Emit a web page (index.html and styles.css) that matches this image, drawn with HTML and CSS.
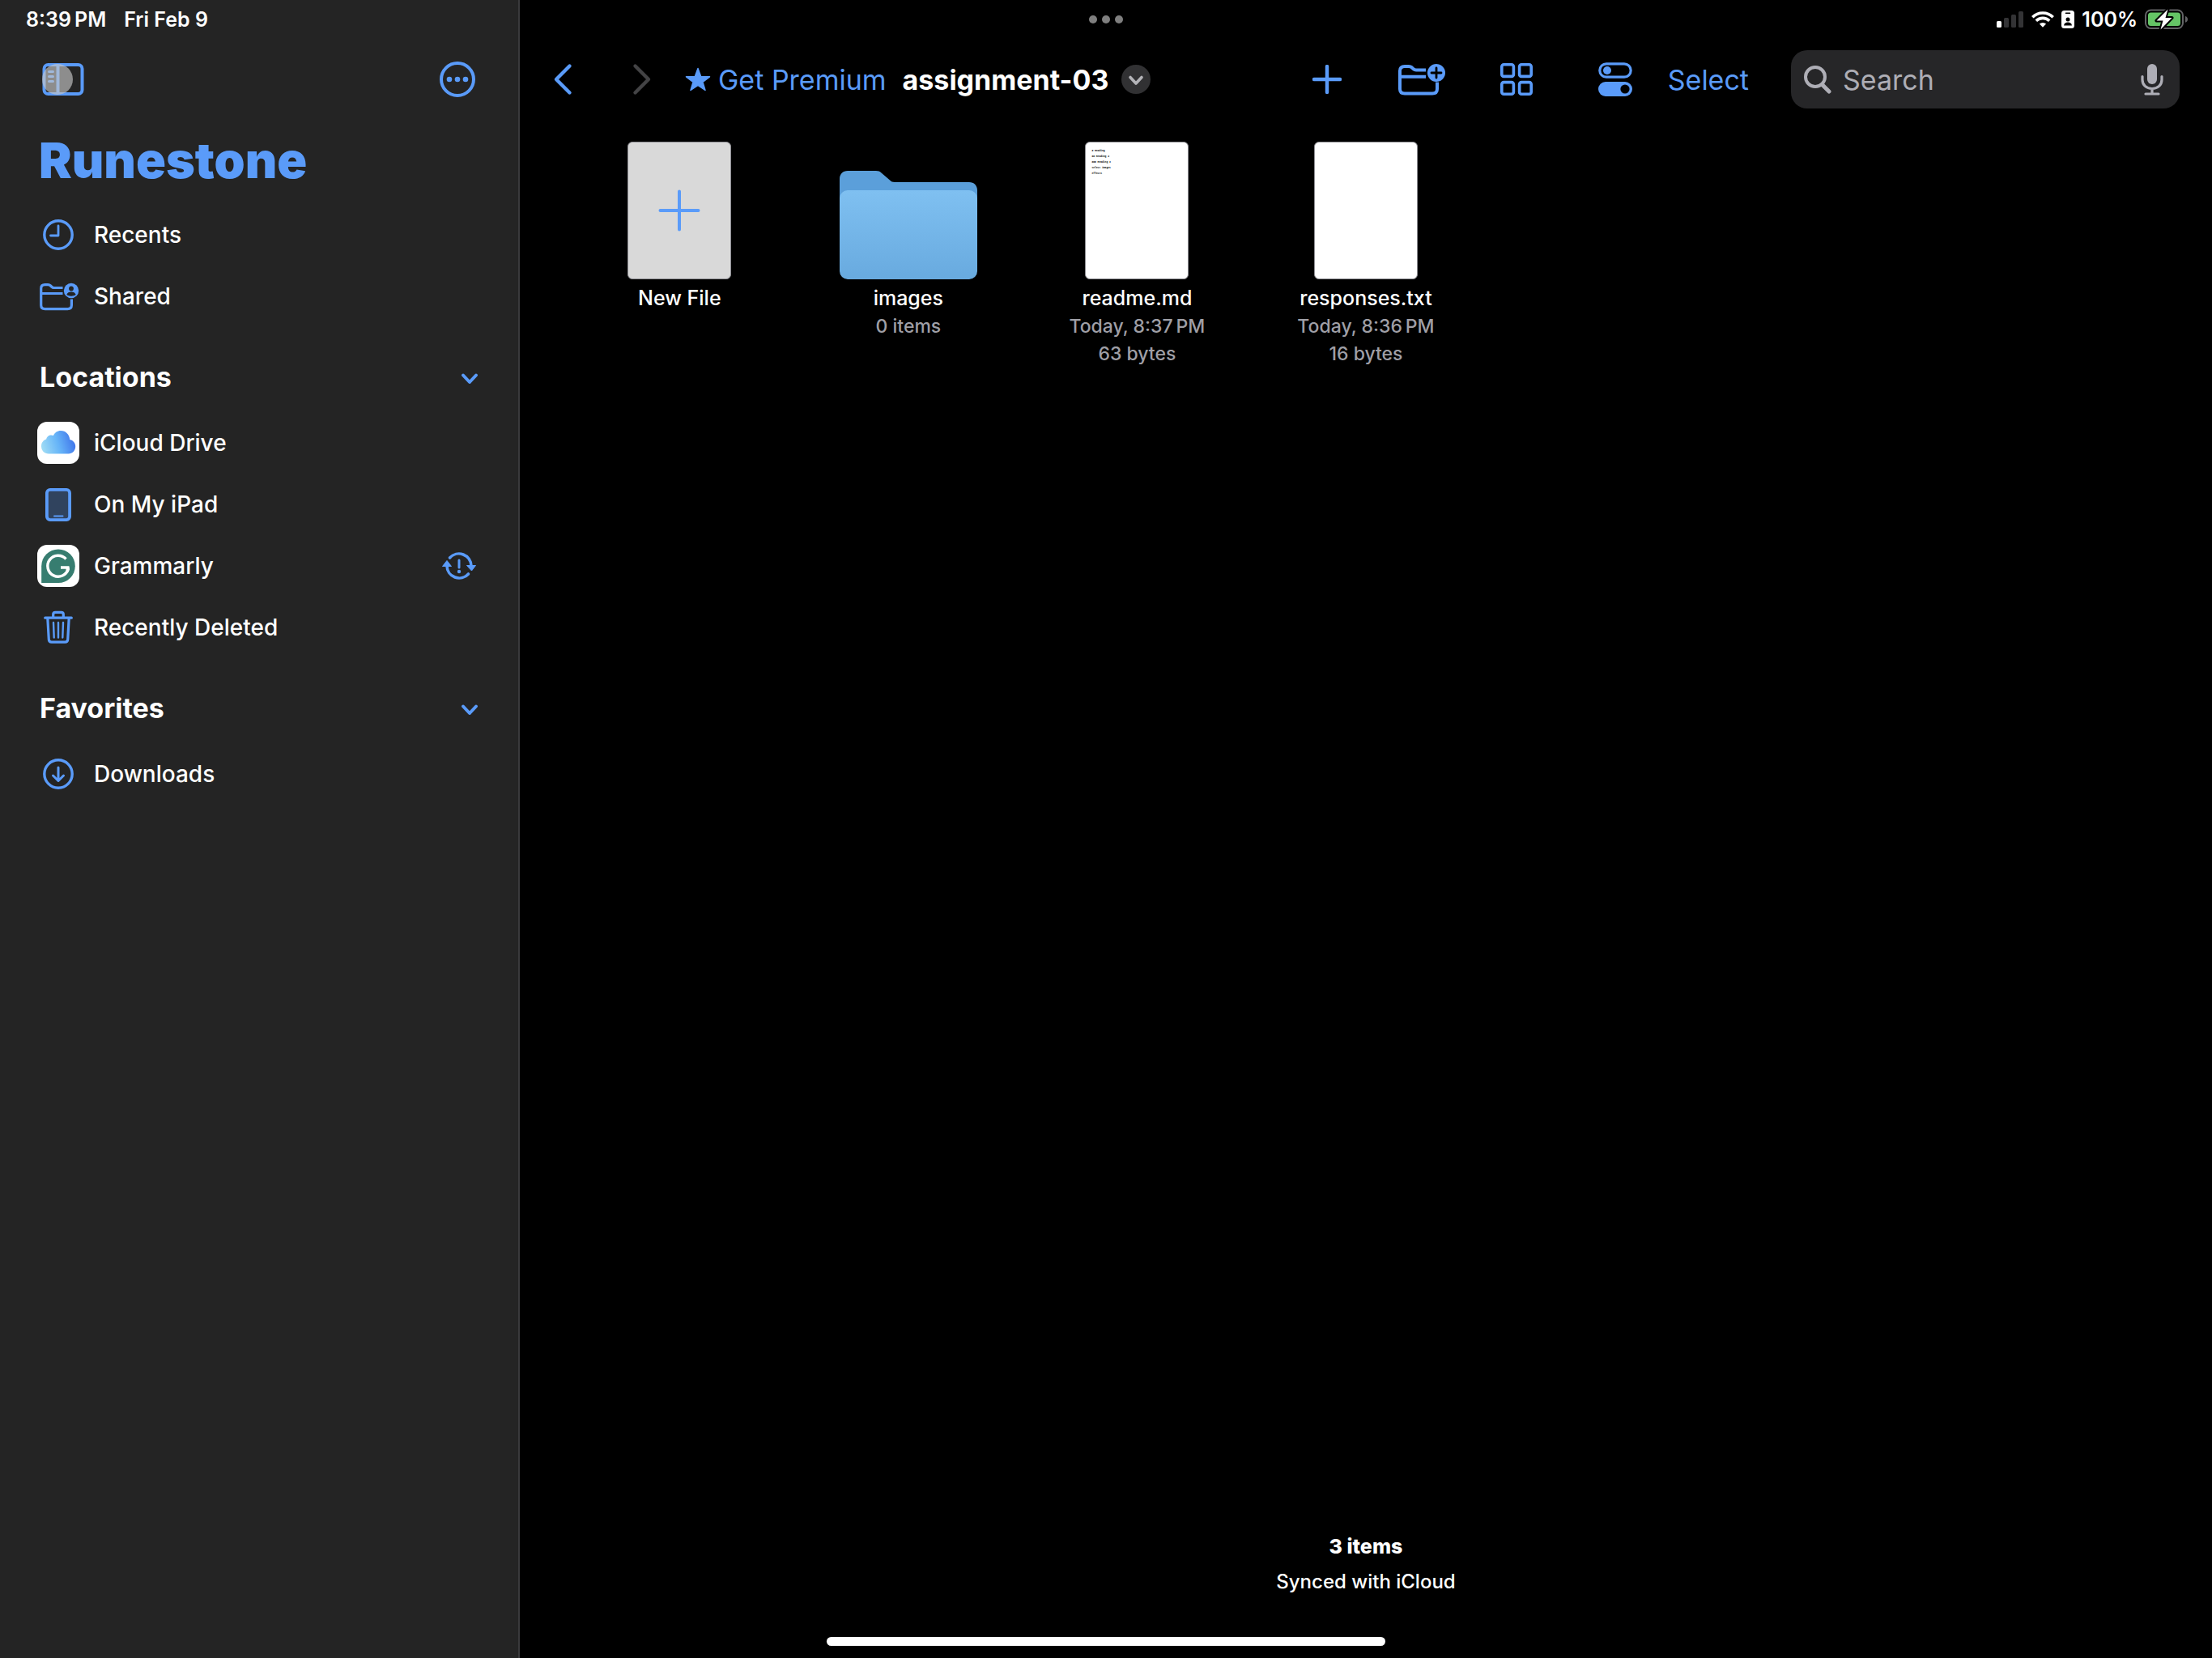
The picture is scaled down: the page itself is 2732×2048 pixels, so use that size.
FILE: index.html
```html
<!DOCTYPE html>
<html lang="en">
<head>
<meta charset="utf-8">
<meta name="viewport" content="width=device-width, initial-scale=1">
<title>Runestone – assignment-03</title>
<link rel="stylesheet" href="styles.css">
</head>
<body>
<div class="app">
  <aside class="sidebar">
    <div class="status status-left">
      <span>8:39&#8239;PM</span>
      <span>Fri Feb 9</span>
    </div>
    <div class="sidebar-tools">
      <button class="icon-button" type="button" aria-label="Toggle sidebar">
        <svg width="52" height="44" viewBox="0 0 52 44">
          <rect x="2.5" y="4" width="47" height="36" rx="5" fill="none" stroke="#5a9bf9" stroke-width="4"/>
          <path d="M19.500 4v36" stroke="#5a9bf9" stroke-width="4"/>
          <path d="M8.500 12.500h5M8.500 18.500h5M8.500 24.500h5" stroke="#5a9bf9" stroke-width="3" stroke-linecap="round"/>
          <circle cx="19" cy="22" r="19" fill="#c8c8c8" fill-opacity=".64"/>
        </svg>
      </button>
      <button class="icon-button" type="button" aria-label="More options">
        <svg width="44" height="44" viewBox="0 0 44 44">
          <circle cx="22" cy="22" r="20" fill="none" stroke="#5a9bf9" stroke-width="4"/>
          <g fill="#5a9bf9"><circle cx="12" cy="22" r="3.300"/><circle cx="22" cy="22" r="3.300"/><circle cx="32" cy="22" r="3.300"/></g>
        </svg>
      </button>
    </div>
    <h1 class="app-title">Runestone</h1>
    <nav class="nav">
      <ul class="nav-list">
        <li><a class="nav-row" href="#recents">
          <svg class="nav-icon" viewBox="0 0 52 52" fill="none" stroke="#5a9bf9" stroke-linecap="round" stroke-linejoin="round">
            <circle cx="26" cy="26" r="17.200" stroke-width="3.400"/>
            <path d="M26 15v12h-9.500" stroke-width="2.800"/>
          </svg>
          <span>Recents</span></a></li>
        <li><a class="nav-row" href="#shared">
          <svg class="nav-icon" viewBox="0 0 52 52">
            <g fill="none" stroke="#5a9bf9" stroke-width="3.200">
              <path d="M31.500 15.500H20.500c-1.500 0-2-.5-3-1.500l-1-1c-1-1-1.700-1.400-3.200-1.400H9.500c-3 0-4.800 1.700-4.800 4.700V37c0 3 1.700 4.600 4.800 4.600h28c3 0 4.900-1.600 4.900-4.600v-7.500M5 22.500h26.500"/>
            </g>
            <circle cx="42" cy="19" r="9.200" fill="#5a9bf9"/>
            <circle cx="42" cy="16.500" r="2.900" fill="#242424"/>
            <path d="M36.300 24c.8-2.500 3-3.500 5.700-3.500s4.900 1 5.700 3.500c-3 2.300-8.400 2.300-11.400 0z" fill="#242424"/>
          </svg>
          <span>Shared</span></a></li>
      </ul>
      <h2 class="nav-heading"><span>Locations</span>
        <button class="icon-button" type="button" aria-label="Collapse Locations">
          <svg width="22" height="20" viewBox="0 -4 22 20"><path d="M3 3.500l8 8.500 8-8.500" fill="none" stroke="#5a9bf9" stroke-width="4" stroke-linecap="round" stroke-linejoin="round"/></svg>
        </button>
      </h2>
      <ul class="nav-list">
        <li><a class="nav-row" href="#icloud">
          <svg class="nav-icon" viewBox="0 0 52 52">
            <defs><linearGradient id="cloud" x1="0" y1=".7" x2="1" y2=".5"><stop offset="0" stop-color="#9fdcf5"/><stop offset=".5" stop-color="#66b4f8"/><stop offset="1" stop-color="#3f74ea"/></linearGradient></defs>
            <rect width="52" height="52" rx="12" fill="#fff"/>
            <path d="M14 39.500c-5 0-9-4-9-9.300 0-4.300 2.600-7.400 6.200-8.600.4-3 3-5.100 6-5.100 1 0 1.900.2 2.700.6C21.700 13.300 25 11 29 11c6 0 10.900 4.800 11.200 11 4.100.8 7 4.300 7 8.500 0 5-3.800 9-8.500 9z" fill="url(#cloud)"/>
          </svg>
          <span>iCloud Drive</span></a></li>
        <li><a class="nav-row" href="#ipad">
          <svg class="nav-icon" viewBox="0 0 52 52">
            <rect x="11.900" y="7.900" width="28.200" height="37.200" rx="4" fill="#30435e" stroke="#5a9bf9" stroke-width="3.800"/>
            <path d="M21 40.500h10.500" stroke="#5a9bf9" stroke-width="2" stroke-linecap="round"/>
          </svg>
          <span>On My iPad</span></a></li>
        <li><a class="nav-row" href="#grammarly">
          <svg class="nav-icon" viewBox="0 0 52 52">
            <rect width="52" height="52" rx="12" fill="#fff"/>
            <path d="M26 5.500a20.800 20.800 0 1 1 0 41.600H5.200V26.300A20.800 20.800 0 0 1 26 5.500z" fill="#377d70"/>
            <path d="M35.500 17.500A13 13 0 1 0 38.400 29.500M39.500 28H29" fill="none" stroke="#fff" stroke-width="3.400"/>
            <path d="M35.500 33.500V28h4.500l-1.200 5.500z" fill="#fff"/>
          </svg>
          <span class="nav-label">Grammarly</span>
          <svg width="44" height="44" viewBox="0 0 44 44" role="img" aria-label="Sync problem">
            <g fill="none" stroke="#5a9bf9" stroke-width="3.600" stroke-linecap="round">
              <path d="M11.500 12A15.200 15.200 0 0 1 38 22M34.500 32A15.200 15.200 0 0 1 8 22"/>
              <path d="M23 15v9" stroke-width="3"/>
            </g>
            <circle cx="23" cy="29" r="2.200" fill="#5a9bf9"/>
            <path d="M32.500 21.500h11l-5 6.500zM2.500 22.500h11l-5.500-7z" fill="#5a9bf9" stroke="#5a9bf9" stroke-linejoin="round"/>
          </svg></a></li>
        <li><a class="nav-row" href="#deleted">
          <svg class="nav-icon" viewBox="0 0 52 52" fill="none" stroke="#5a9bf9" stroke-width="3.200" stroke-linecap="round" stroke-linejoin="round">
            <path d="M9.700 14.200h32.600M19.700 13.500V10c0-1.700 1-2.600 2.700-2.600h7.200c1.700 0 2.700.9 2.700 2.600v3.500M12.800 14.500l1.500 26.300c.1 2 1.400 3.300 3.400 3.300h16.600c2 0 3.300-1.300 3.400-3.300l1.500-26.300"/>
            <path d="M20 20l.7 18.500M26 20v18.500M32 20l-.7 18.500" stroke-width="2.400"/>
          </svg>
          <span>Recently Deleted</span></a></li>
      </ul>
      <h2 class="nav-heading"><span>Favorites</span>
        <button class="icon-button" type="button" aria-label="Collapse Favorites">
          <svg width="22" height="20" viewBox="0 -4 22 20"><path d="M3 3.500l8 8.500 8-8.500" fill="none" stroke="#5a9bf9" stroke-width="4" stroke-linecap="round" stroke-linejoin="round"/></svg>
        </button>
      </h2>
      <ul class="nav-list">
        <li><a class="nav-row" href="#downloads">
          <svg class="nav-icon" viewBox="0 0 52 52" fill="none" stroke="#5a9bf9" stroke-linecap="round" stroke-linejoin="round">
            <circle cx="26" cy="26" r="17.200" stroke-width="3.400"/>
            <path d="M26 18v16M19.500 28l6.500 6.500 6.500-6.500" stroke-width="3"/>
          </svg>
          <span>Downloads</span></a></li>
      </ul>
    </nav>
  </aside>

  <main class="main">
    <div class="status status-right">
      <svg width="34" height="20" viewBox="0 0 34 20">
        <rect x="0" y="12" width="6" height="8" rx="1.500" fill="#fff"/>
        <g fill="#333335"><rect x="9" y="8" width="6" height="12" rx="1.500"/><rect x="18" y="4" width="6" height="16" rx="1.500"/><rect x="27" y="0" width="6" height="20" rx="1.500"/></g>
      </svg>
      <svg width="28" height="20" viewBox="0 0 28 20">
        <g fill="none" stroke="#fff" stroke-width="3.600"><path d="M1.300 7.200a18 18 0 0 1 25.400 0M5.800 11.800a11.600 11.600 0 0 1 16.400 0"/></g>
        <path d="M9.900 15.600a5.800 5.800 0 0 1 8.200 0L14 19.800z" fill="#fff"/>
      </svg>
      <svg width="16" height="22" viewBox="0 0 16 22">
        <rect x="0" y="0" width="16" height="22" rx="3.500" fill="#fff"/>
        <path d="M5.500 3.200h5" stroke="#000" stroke-width="1.600" stroke-linecap="round"/>
        <circle cx="8" cy="11" r="2.500" fill="#000"/>
        <path d="M3 18.500c.5-3 2.500-4 5-4s4.500 1 5 4z" fill="#000"/>
      </svg>
      <span>100%</span>
      <svg width="54" height="26" viewBox="0 0 54 26">
        <rect x="1" y="1.500" width="46" height="22.500" rx="6.500" fill="none" stroke="#636366" stroke-width="2"/>
        <rect x="4" y="4.500" width="40" height="16.500" rx="3.500" fill="#65c466"/>
        <path d="M50 9c4 .8 4 7 0 7.800z" fill="#636366"/>
        <path d="M28.500.5L14.500 14.500h8L19.500 25.500l14-14.500h-8z" fill="#fff" stroke="#000" stroke-width="4" stroke-linejoin="round" paint-order="stroke"/>
      </svg>
    </div>

    <header class="toolbar">
      <div class="group history">
        <button class="icon-button" type="button" aria-label="Back">
          <svg width="24" height="40" viewBox="0 0 24 40"><path d="M20.500 3.500L4 20l16.500 16.500" fill="none" stroke="#5a9bf9" stroke-width="4.400" stroke-linecap="round" stroke-linejoin="round"/></svg>
        </button>
        <button class="icon-button" type="button" aria-label="Forward" disabled>
          <svg width="24" height="40" viewBox="0 0 24 40"><path d="M3.500 3.500L20 20 3.500 36.500" fill="none" stroke="#434345" stroke-width="4.400" stroke-linecap="round" stroke-linejoin="round"/></svg>
        </button>
      </div>
      <button class="premium" type="button">
        <svg width="32" height="30" viewBox="0 0 32 30"><path d="M16 1.500l3.700 10 10.800.3-8.600 6.500 3.100 10.200-9-6-9 6 3.100-10.200L1.500 11.800l10.800-.3z" fill="#5a9bf9" stroke="#5a9bf9" stroke-width="1.500" stroke-linejoin="round"/></svg>
        <span>Get Premium</span>
      </button>
      <button class="folder-title" type="button">
        <span>assignment-03</span>
        <svg width="36" height="36" viewBox="0 0 36 36"><circle cx="18" cy="18" r="18" fill="#313133"/><path d="M11 15.500l7 7.500 7-7.500" fill="none" stroke="#b4b4b8" stroke-width="3.600" stroke-linecap="round" stroke-linejoin="round"/></svg>
      </button>
      <div class="group actions">
        <button class="icon-button" type="button" aria-label="New file">
          <svg width="36" height="36" viewBox="0 0 36 36"><path d="M18 2v32M2 18h32" stroke="#5a9bf9" stroke-width="4.400" stroke-linecap="round"/></svg>
        </button>
        <button class="icon-button" type="button" aria-label="New folder">
          <svg width="60" height="44" viewBox="0 0 60 44">
            <path d="M34 10.500H22c-1.800 0-2.500-.6-3.600-1.600l-1.600-1.500c-1.200-1-2-1.400-3.900-1.400H8c-3.800 0-6 2-6 5.500v22.500c0 3.500 2.200 5.500 6 5.500h34c3.800 0 6-2 6-5.500v-8.500M2 18.700h32" fill="none" stroke="#5a9bf9" stroke-width="4"/>
            <circle cx="47" cy="14" r="11" fill="#5a9bf9"/>
            <path d="M47 8v12M41 14h12" stroke="#000" stroke-width="2.800" stroke-linecap="round"/>
          </svg>
        </button>
        <button class="icon-button" type="button" aria-label="Grid view">
          <svg width="40" height="40" viewBox="0 0 40 40" fill="none" stroke="#5a9bf9" stroke-width="3.600">
            <rect x="1.800" y="1.800" width="14.600" height="14.600" rx="2.500"/><rect x="23.600" y="1.800" width="14.600" height="14.600" rx="2.500"/>
            <rect x="1.800" y="23.600" width="14.600" height="14.600" rx="2.500"/><rect x="23.600" y="23.600" width="14.600" height="14.600" rx="2.500"/>
          </svg>
        </button>
        <button class="icon-button" type="button" aria-label="View options">
          <svg width="42" height="42" viewBox="0 0 42 42">
            <rect x="1.800" y="1.800" width="38.400" height="16.400" rx="8.200" fill="none" stroke="#5a9bf9" stroke-width="3.200"/>
            <circle cx="11" cy="10" r="5" fill="#5a9bf9"/>
            <rect x="0" y="24" width="42" height="18" rx="9" fill="#5a9bf9"/>
            <circle cx="33" cy="33" r="5.600" fill="#000"/>
          </svg>
        </button>
      </div>
      <button class="select" type="button">Select</button>
      <label class="search">
        <svg width="34" height="36" viewBox="0 0 34 36"><circle cx="14" cy="15" r="12" fill="none" stroke="#aeaeb6" stroke-width="4"/><path d="M22.500 24.500l8.500 8.500" stroke="#aeaeb6" stroke-width="5" stroke-linecap="round"/></svg>
        <input class="search-input" type="text" placeholder="Search" aria-label="Search">
        <svg width="28" height="40" viewBox="0 0 28 40">
          <rect x="8" y="1" width="12" height="25" rx="6" fill="#aeaeb6"/>
          <path d="M2 16.500v4c0 6.500 5 11 12 11s12-4.500 12-11v-4M14 32v6M6 38h16" fill="none" stroke="#aeaeb6" stroke-width="3.200" stroke-linecap="round"/>
        </svg>
      </label>
    </header>

    <ul class="files">
      <li><button class="file" type="button">
        <span class="thumb thumb-new"><svg width="52" height="52" viewBox="0 0 52 52"><path d="M26 2.500v47M2.500 26h47" stroke="#5a9bf9" stroke-width="4" stroke-linecap="round"/></svg></span>
        <span class="file-name">New File</span>
      </button></li>
      <li><button class="file" type="button">
        <span class="thumb-folder"><svg width="170" height="134" viewBox="0 0 170 134">
          <defs><linearGradient id="folder" x1="0" y1="0" x2="0" y2="1"><stop offset="0" stop-color="#7fc0f1"/><stop offset="1" stop-color="#68aadf"/></linearGradient></defs>
          <path d="M0 40V10C0 4 4 0 10 0h35c3 0 4.500.7 6.500 2.500L62 11.500c2 1.800 3 2.500 6 2.500h92c6 0 10 4 10 10v20z" fill="#5b9fda"/>
          <rect y="24" width="170" height="110" rx="10" fill="url(#folder)"/>
        </svg></span>
        <span class="file-name">images</span>
        <span class="file-meta">0 items</span>
      </button></li>
      <li><button class="file" type="button">
        <span class="thumb thumb-text"><span># Heading</span><span>## Heading 2</span><span>### Heading 3</span><span>select images</span><span>effects</span></span>
        <span class="file-name">readme.md</span>
        <span class="file-meta">Today, 8:37&#8239;PM</span>
        <span class="file-meta">63 bytes</span>
      </button></li>
      <li><button class="file" type="button">
        <span class="thumb"></span>
        <span class="file-name">responses.txt</span>
        <span class="file-meta">Today, 8:36&#8239;PM</span>
        <span class="file-meta">16 bytes</span>
      </button></li>
    </ul>

    <footer class="summary">
      <strong>3 items</strong>
      <span>Synced with iCloud</span>
    </footer>
  </main>

  <button class="multitask" type="button" aria-label="Multitasking"><i></i><i></i><i></i></button>
  <div class="home-indicator"></div>
</div>
</body>
</html>
```
FILE: styles.css
```css
* {
  box-sizing: border-box;
}

body {
  margin: 0;
  background: #000;
  color: #fff;
  font-family: Inter, "Liberation Sans", sans-serif;
  font-size: 28px;
  font-weight: 500;
}

button {
  padding: 0;
  border: 0;
  background: none;
  color: inherit;
  font: inherit;
}

ul {
  margin: 0;
  padding: 0;
  list-style: none;
}

svg {
  display: block;
  flex: none;
}

.app {
  position: relative;
  display: grid;
  grid-template-columns: 642px 1fr;
  min-height: 100vh;
}

/* Status bar, split over the two columns */
.status {
  display: flex;
  align-items: center;
  height: 48px;
  font-size: 25px;
  font-weight: 600;
}

.status-left {
  gap: 22px;
  padding-left: 32px;
}

.status-right {
  justify-content: flex-end;
  gap: 9px;
  padding-right: 29px;
}

/* Sidebar */
.sidebar {
  border-right: 2px solid #3a3a3c;
  background: #242424;
}

.sidebar-tools {
  display: flex;
  align-items: center;
  justify-content: space-between;
  height: 100px;
  padding: 0 53px 0 52px;
}

.app-title {
  margin: 14px 0 18px;
  padding-left: 48px;
  color: #5a9bf9;
  font-size: 61px;
  font-weight: 900;
  line-height: 72px;
}

.nav-row {
  display: flex;
  align-items: center;
  gap: 18px;
  height: 76px;
  padding: 0 52px 0 46px;
  color: inherit;
  text-decoration: none;
}

.nav-icon {
  width: 52px;
  height: 52px;
}

.nav-label {
  flex: 1;
}

.nav-heading {
  display: flex;
  align-items: center;
  justify-content: space-between;
  margin: 0;
  padding: 40px 49px 21px 49px;
  font-size: 34px;
  font-weight: 700;
  line-height: 44px;
}

/* Toolbar */
.main {
  display: flex;
  flex-direction: column;
}

.toolbar {
  display: flex;
  align-items: center;
  height: 100px;
  padding: 0 40px 0 41px;
  font-size: 34px;
  font-weight: 400;
}

.group {
  display: flex;
  align-items: center;
}

.history {
  gap: 74px;
}

.premium {
  display: flex;
  align-items: center;
  gap: 9px;
  margin-left: 41px;
  color: #5a9bf9;
}

.folder-title {
  display: flex;
  align-items: center;
  gap: 16px;
  margin-left: 20px;
  font-weight: 700;
}

.actions {
  gap: 66px;
  margin-left: auto;
}

.actions .icon-button:nth-child(1) {
  margin-right: 4px;
}

.actions .icon-button:nth-child(3) {
  margin-right: 15px;
}

.select {
  margin: 0 52px 0 44px;
  color: #5a9bf9;
}

.search {
  display: flex;
  align-items: center;
  gap: 14px;
  width: 480px;
  height: 72px;
  padding: 0 20px 0 16px;
  border-radius: 20px;
  background: #262628;
}

.search-input {
  flex: 1;
  min-width: 0;
  padding: 0;
  border: 0;
  outline: 0;
  background: none;
  color: #fff;
  font: inherit;
}

.search-input::placeholder {
  color: #aeaeb6;
  opacity: 1;
}

/* File grid */
.files {
  display: grid;
  grid-template-columns: repeat(auto-fill, minmax(260px, 1fr));
  padding: 27px 56px 0;
}

.file {
  display: flex;
  flex-direction: column;
  align-items: center;
  width: 100%;
  line-height: 35px;
}

.thumb {
  width: 128px;
  height: 170px;
  border: 1px solid #8e8e93;
  border-radius: 6px;
  background: #fff;
}

.thumb-new {
  display: grid;
  place-items: center;
  background: #d9d9d9;
}

.thumb-folder {
  display: flex;
  align-items: flex-end;
  height: 170px;
}

.thumb-text {
  display: flex;
  flex-direction: column;
  padding: 7px;
  color: #000;
  font-family: "Liberation Mono", monospace;
  font-size: 3px;
  font-weight: 700;
  line-height: 7px;
  text-align: left;
}

.file-name {
  margin-top: 6px;
  font-size: 25px;
}

.file-meta {
  color: #9f9fa6;
  font-size: 23px;
  line-height: 34px;
}

.summary {
  display: flex;
  flex-direction: column;
  align-items: center;
  gap: 8px;
  margin-top: auto;
  padding-bottom: 77px;
  font-size: 24px;
  line-height: 35px;
}

.summary strong {
  font-size: 25px;
  font-weight: 800;
}

/* System overlays */
.multitask {
  position: absolute;
  top: 19px;
  left: 50%;
  display: flex;
  gap: 6px;
  transform: translateX(-50%);
}

.multitask i {
  width: 10px;
  height: 10px;
  border-radius: 50%;
  background: #7f7f7f;
}

.home-indicator {
  position: absolute;
  bottom: 15px;
  left: 50%;
  width: 690px;
  height: 11px;
  border-radius: 6px;
  background: #fff;
  transform: translateX(-50%);
}
```
